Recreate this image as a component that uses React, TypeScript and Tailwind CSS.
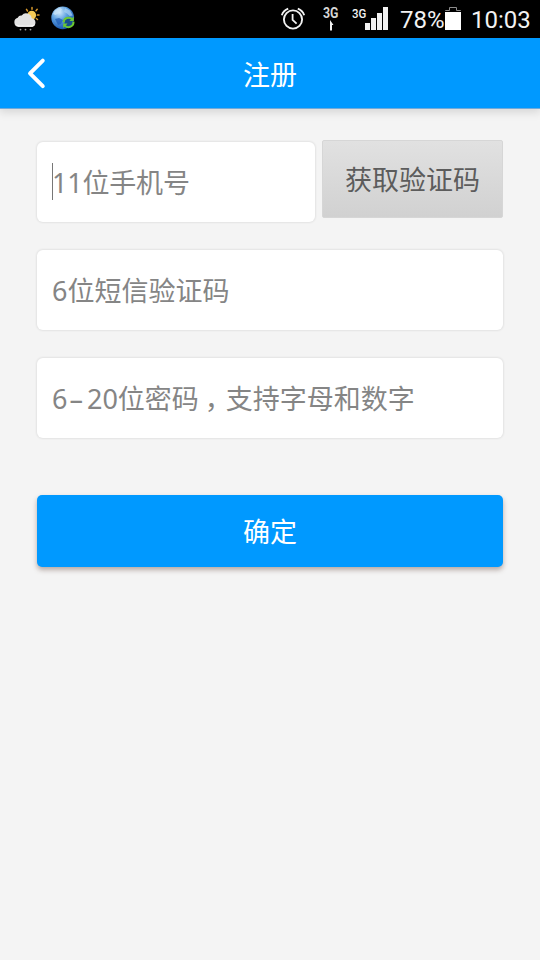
import { ReactNode } from 'react';

function WeatherIcon() {
  return (
    <svg className="h-[26px] w-[28px]" viewBox="0 0 28 26" aria-hidden="true">
      <g stroke="#d99a2b" strokeWidth="1.5" strokeLinecap="round">
        <path d="M19 1.5v1.8M13.5 3.4l1 1.6M24.2 3.3l-1.2 1.4M26 9h-1.6M24.5 13.5l-1.2-1" />
      </g>
      <circle cx="18.7" cy="9.2" r="4.4" fill="#f7cb55" />
      <path
        d="M5.5 20.8a4.6 4.6 0 01-.8-9 3.8 3.8 0 014-2.3 5.6 5.6 0 0110 2.7 4.4 4.4 0 01.5 8.6z"
        fill="#e3e3e3"
      />
      <path d="M3 18.5c4 1.6 14 1.6 19 0a4 4 0 01-2.5 2.3h-14A4 4 0 013 18.5z" fill="#f8f8f8" />
      <g fill="#a5a5a5">
        <circle cx="7.5" cy="23.6" r="0.9" />
        <circle cx="12.5" cy="23.6" r="0.9" />
        <circle cx="17.5" cy="23.6" r="0.9" />
      </g>
    </svg>
  );
}

function GlobeIcon() {
  return (
    <svg className="h-6 w-6" viewBox="0 0 24 24" aria-hidden="true">
      <defs>
        <radialGradient id="globe" cx="0.35" cy="0.25" r="0.8">
          <stop offset="0" stopColor="#d5ecfc" />
          <stop offset="0.45" stopColor="#5b9fe0" />
          <stop offset="1" stopColor="#1350ac" />
        </radialGradient>
      </defs>
      <circle cx="11.7" cy="11.8" r="11.4" fill="url(#globe)" />
      <path d="M4 4.5l5-2.7 2 1.6-2.4 3L4.5 9 2 8z" fill="#c6e2f8" opacity="0.8" />
      <path d="M14 2l5 2.5 2.7 5-3 .5-2.6-2.5L13 6z" fill="#a9d2f4" opacity="0.7" />
      <path d="M4 13l4-1 4 2-2 4-3 1z" fill="#1c59b3" opacity="0.7" />
      <circle cx="17.5" cy="16.5" r="4" fill="#174f8e" />
      <g fill="none" stroke="#6cc832" strokeWidth="2">
        <path d="M12.6 16.4a5 4.8 0 018.6-3.2" />
        <path d="M22.4 15.6a5 4.8 0 01-8.6 4" />
      </g>
      <path d="M22.8 10.6v4.4h-4.4zM12.2 22v-4.4h4.4z" fill="#6cc832" />
    </svg>
  );
}

function AlarmIcon() {
  return (
    <svg
      className="h-[24px] w-[26px]"
      viewBox="0 0 26 24"
      fill="none"
      stroke="#f2f2f2"
      aria-hidden="true"
    >
      <circle cx="13" cy="12.5" r="9.1" strokeWidth="1.9" />
      <path d="M12.6 7v5.8l4 3.8" strokeWidth="1.8" />
      <path d="M1.8 8.3C2.8 5.2 5 3 8.2 1.7M24.2 8.3c-1-3.1-3.2-5.3-6.4-6.6" strokeWidth="1.8" />
    </svg>
  );
}

function StatusBar() {
  return (
    <div className="flex h-[38px] items-start bg-black text-[#f2f2f2] font-[Roboto,sans-serif]">
      <div className="ml-[13px] mt-[6px]">
        <WeatherIcon />
      </div>
      <div className="ml-[10px] mt-[6px]">
        <GlobeIcon />
      </div>
      <div className="ml-[205px] mt-[7px]">
        <AlarmIcon />
      </div>
      <div className="ml-[16px] mt-[7px] flex w-[17px] flex-col items-center">
        <span className="origin-center scale-x-[0.88] text-[14px] leading-[13px] font-bold text-[#d6d6d6]">
          3G
        </span>
        <svg className="h-[11px] w-[6px]" viewBox="0 0 6 11" fill="#f2f2f2" aria-hidden="true">
          <path d="M2 0l3.5 5H4v5.5H2z" />
        </svg>
      </div>
      <span className="ml-[13px] mt-[7px] w-[13px] origin-left scale-x-[0.88] whitespace-nowrap text-[13px] leading-[13px] font-medium">
        3G
      </span>
      <svg className="mt-[7px] h-[23px] w-[24px]" viewBox="0 0 24 23" fill="#f2f2f2" aria-hidden="true">
        <path d="M0 16h5v7H0zM6 11h5v12H6zM12 6h5v17h-5zM18 0h5v23h-5z" />
      </svg>
      <span className="ml-[11px] mt-[6px] w-[44px] whitespace-nowrap text-[24px] leading-[29px]">
        78%
      </span>
      <svg className="ml-[1px] mt-[7px] h-[23px] w-[16px]" viewBox="0 0 16 23" aria-hidden="true">
        <path d="M0.5 4V3.5h4V.5h7v3h4V4" fill="none" stroke="#8c8c8c" />
        <path d="M0 5h16v18H0z" fill="#fff" />
      </svg>
      <span className="ml-[10px] mt-[6px] whitespace-nowrap text-[24px] leading-[29px]">10:03</span>
    </div>
  );
}

function Header() {
  return (
    <header className="grid h-[71px] grid-cols-[1fr_auto_1fr] items-center border-b border-[#72a9d8] bg-[#0099ff] shadow-[0_2px_9px_1px_rgba(0,0,0,0.13)]">
      <button aria-label="返回" className="ml-[26px] w-5">
        <svg
          className="h-8 w-5"
          viewBox="0 0 20 32"
          fill="none"
          stroke="white"
          strokeWidth="3.9"
          strokeLinecap="round"
          strokeLinejoin="round"
          aria-hidden="true"
        >
          <path d="M16.8 3.6L4 16.4l12.8 12.8" />
        </svg>
      </button>
      <h1 className="pt-[3px] text-[27px] leading-10 text-white">注册</h1>
    </header>
  );
}

function Field({ children, className = '' }: { children: ReactNode; className?: string }) {
  return (
    <div
      className={[
        'flex h-[80px] items-center rounded-[6px] bg-white pl-[15px] text-[27px] text-[#858585] whitespace-nowrap shadow-[0_0_2px_1px_rgba(0,0,0,0.07)]',
        className,
      ].join(' ')}
    >
      {children}
    </div>
  );
}

export default function App() {
  return (
    <div className="flex h-[960px] w-[540px] flex-col bg-[#f4f4f4] font-['Noto_Sans','Noto_Sans_CJK_SC',sans-serif]">
      <StatusBar />
      <Header />

      <main className="flex flex-col px-[37px] pt-[33px]">
        {/* Phone number + send code */}
        <div className="flex items-start">
          <Field className="w-[278px]">
            <span className="-mt-px h-[37px] w-px bg-[#777777]" />
            <span className="-ml-px pt-[2px] tracking-[-0.2px]">11位手机号</span>
          </Field>
          <button className="-mt-[2px] ml-[7px] h-[78px] w-[181px] rounded-[2px] border border-[#d6d6d6] bg-linear-to-b from-[#e1e1e1] to-[#d1d1d1] pt-[3px] text-[27px] text-[#5c5c5c]">
            获取验证码
          </button>
        </div>

        <Field className="mt-7">
          <span className="pt-[2px]">6位短信验证码</span>
        </Field>

        {/* the comma sits in the middle of its full-width cell */}
        <Field className="mt-7">
          <span className="pt-[2px]">
            6<span className="mr-[4px] ml-[2px]">–</span>20位密码
            <span className="mr-[-6px] ml-[6px]">，</span>支持字母和数字
          </span>
        </Field>

        <button className="mt-[57px] h-[72px] rounded-[5px] bg-[#0099ff] pt-[3px] text-[27px] text-white shadow-[0_3px_5px_rgba(90,60,50,0.4)]">
          确定
        </button>
      </main>
    </div>
  );
}
